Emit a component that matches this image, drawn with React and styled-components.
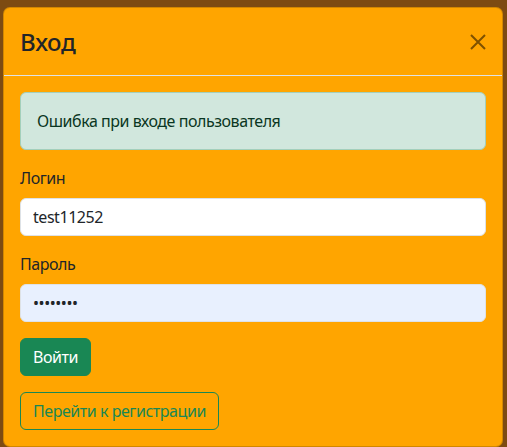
import React from "react";
import styled, { createGlobalStyle } from "styled-components";

const GlobalStyle = createGlobalStyle`
  html, body {
    margin: 0;
    padding: 0;
    background: #7d4b12;
  }
  body {
    font-family: "Noto Sans", "Open Sans", sans-serif;
    color: #212529;
  }
`;

const Backdrop = styled.div`
  min-height: 447px;
  padding: 7px 4px 0 3px;
  box-sizing: border-box;
  display: flex;
  align-items: flex-start;
`;

const Modal = styled.div`
  width: 500px;
  box-sizing: border-box;
  background: #ffa500;
  border: 1px solid rgba(0, 0, 0, 0.175);
  border-radius: 7px;
  display: flex;
  flex-direction: column;
`;

const Header = styled.div`
  display: flex;
  align-items: center;
  justify-content: space-between;
  padding: 16px;
  border-bottom: 1px solid #dee2e6;
`;

const Title = styled.h4`
  margin: 0;
  font-size: 24px;
  font-weight: 500;
  line-height: 35px;
  letter-spacing: -0.3px;
  color: #212529;
`;

const CloseButton = styled.button`
  width: 24px;
  height: 24px;
  padding: 0;
  margin-right: -4px;
  border: none;
  background: transparent;
  display: flex;
  align-items: center;
  justify-content: center;
  cursor: pointer;
  opacity: 0.5;
`;

const Body = styled.div`
  padding: 16px;
  display: flex;
  flex-direction: column;
  letter-spacing: -0.45px;
`;

const Alert = styled.div`
  padding: 16px;
  background: #d1e7dd;
  border: 1px solid #a3cfbb;
  border-radius: 6px;
  color: #0a3622;
  font-size: 16px;
  line-height: 24px;
  margin-bottom: 16px;
`;

const Field = styled.div`
  display: flex;
  flex-direction: column;
  margin-bottom: 16px;
`;

const Label = styled.label`
  font-size: 16px;
  line-height: 24px;
  margin-bottom: 8px;
`;

const Input = styled.input`
  height: 38px;
  box-sizing: border-box;
  padding: 6px 12px;
  font-family: inherit;
  font-size: 16px;
  line-height: 24px;
  letter-spacing: inherit;
  color: #212529;
  background: ${(p) => (p.$autofill ? "#e8f0fe" : "#fff")};
  border: 1px solid #dee2e6;
  border-radius: 6px;
  outline: none;
`;

const Button = styled.button`
  align-self: flex-start;
  height: 38px;
  box-sizing: border-box;
  padding: 6px 12px;
  font-family: inherit;
  font-size: 16px;
  line-height: 24px;
  letter-spacing: inherit;
  border-radius: 6px;
  border: 1px solid #198754;
  background: ${(p) => (p.$outline ? "transparent" : "#198754")};
  color: ${(p) => (p.$outline ? "#198754" : "#fff")};
  margin-bottom: ${(p) => (p.$last ? "0" : "16px")};
  cursor: pointer;
`;

export default function App() {
  return (
    <>
      <GlobalStyle />
      <Backdrop>
        <Modal>
          <Header>
            <Title>Вход</Title>
            <CloseButton aria-label="Закрыть">
              <svg width="16" height="16" viewBox="0 0 16 16">
                <path
                  d="M1 1L15 15M15 1L1 15"
                  stroke="#000"
                  strokeWidth="2"
                  fill="none"
                />
              </svg>
            </CloseButton>
          </Header>
          <Body>
            <Alert>Ошибка при входе пользователя</Alert>
            <Field>
              <Label>Логин</Label>
              <Input type="text" defaultValue="test11252" />
            </Field>
            <Field>
              <Label>Пароль</Label>
              <Input type="password" defaultValue="12345678" $autofill />
            </Field>
            <Button>Войти</Button>
            <Button $outline $last>
              Перейти к регистрации
            </Button>
          </Body>
        </Modal>
      </Backdrop>
    </>
  );
}
